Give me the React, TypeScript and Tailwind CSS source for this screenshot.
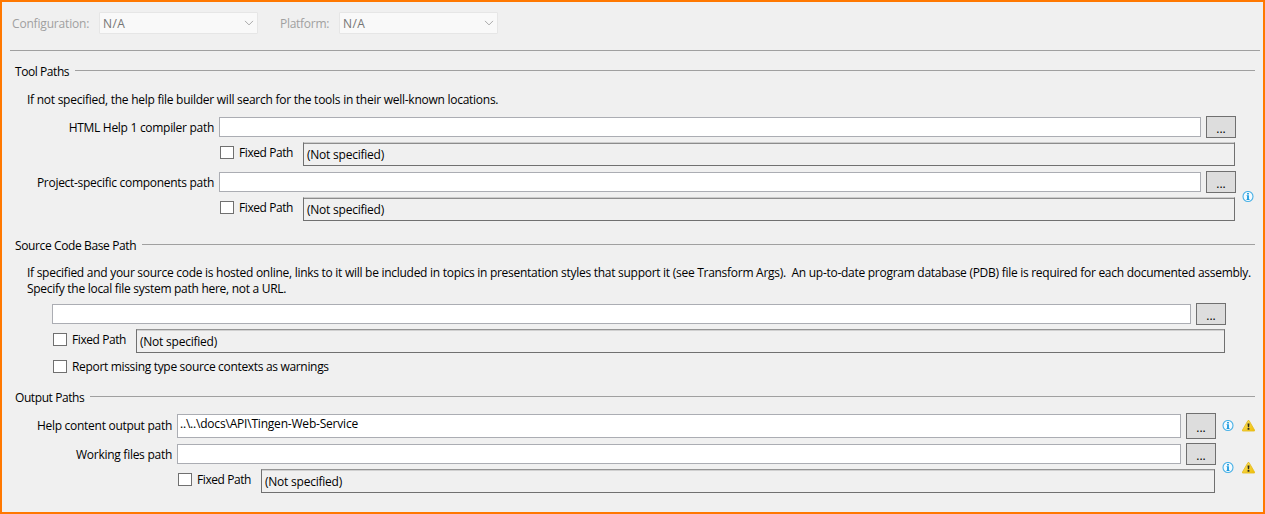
import type { ReactNode } from 'react';

function Select({ value }: { value: string }) {
  return (
    <div className="flex h-[22px] w-[159px] items-center justify-between rounded-[1px] border border-[#e6e6e6] bg-[#f9f9f9] pr-[3px] pl-[3px] text-[#757575]">
      <span className="pt-[2px] tracking-[0.4px]">{value}</span>
      <svg width="10" height="6" viewBox="0 0 10 6" fill="none" stroke="#a9a9a9">
        <path d="M1 0.9 L5 4.9 L9 0.9" />
      </svg>
    </div>
  );
}

function Heading({ children }: { children: ReactNode }) {
  return (
    <div className="flex h-4 items-start gap-[7px] pl-[13px] pr-2">
      <h2 className="shrink-0 leading-4">{children}</h2>
      <div className="mt-[6px] h-px flex-1 bg-[#a0a0a0]" />
    </div>
  );
}

function Browse({ className }: { className: string }) {
  return (
    <button className={`w-[30px] shrink-0 border border-[#707070] bg-[#dddddd] pt-[3px] text-center leading-4 ${className}`}>
      ...
    </button>
  );
}

function Check({ label, className = '' }: { label: string; className?: string }) {
  return (
    <label className={`flex shrink-0 items-center gap-[5px] leading-[13px] ${className}`}>
      <span className="h-[13px] w-[14px] border border-[#707070] bg-white" />
      <span>{label}</span>
    </label>
  );
}

function FixedPath({ edge }: { edge: string }) {
  return (
    <div className="flex items-start">
      <Check label="Fixed Path" className="mt-[4px] w-[83px] tracking-[-0.42px]" />
      <div className={`flex h-6 flex-1 items-center border border-[#707070] pt-[2px] pl-[3px] tracking-[-0.23px] ${edge}`}>
        (Not specified)
      </div>
    </div>
  );
}

const softTop = 'border-t-[#cccccc] shadow-[inset_0_1px_0_#8c8c8c]';
const hardTop = 'border-t-[#949494] shadow-[inset_0_1px_0_#d0d0d0]';

function Info() {
  return (
    <svg width="12" height="12" viewBox="0 0 12 12">
      <circle cx="6" cy="5.5" r="5" fill="#f4fbff" stroke="#49b1e6" strokeWidth="1.1" />
      <path d="M5.1 2.1h1.8v1.4H5.1zM4.6 4.3h2.3v3.8h.6v.8H4.6v-.8h.5v-3h-.5z" fill="#1b9ade" />
    </svg>
  );
}

function Warning() {
  return (
    <svg width="13" height="12" viewBox="0 0 13 12">
      <defs>
        <linearGradient id="warn" x1="0" y1="0" x2="1" y2="1">
          <stop offset="0" stopColor="#f9e26c" />
          <stop offset="1" stopColor="#f0bd00" />
        </linearGradient>
      </defs>
      <path d="M6 0.5 H7 L12.5 10 V11 H0.5 V10 Z" fill="url(#warn)" stroke="#e5bd25" strokeWidth="0.9" strokeLinejoin="round" />
      <path d="M5.5 3.4h2l-.4 3.9H5.9zM5.6 8.1h1.8v1.6H5.6z" fill="#2b2b20" />
    </svg>
  );
}

export default function App() {
  return (
    <main className="h-[514px] w-[1265px] overflow-hidden border-2 border-[#ff7800] bg-[#f0f0f0] font-['Open_Sans','Noto_Sans',sans-serif] text-[12px] whitespace-nowrap text-black">
      <header className="mr-[3px] ml-2 flex h-[49px] items-start border-b border-[#a0a0a0] pt-[10px] pl-[2px] leading-[22px] text-[#a0a0a0]">
        <span className="w-[87px] pt-px tracking-[-0.18px]">Configuration:</span>
        <Select value="N/A" />
        <span className="ml-[22px] w-[59px] pt-px tracking-[-0.28px]">Platform:</span>
        <Select value="N/A" />
      </header>

      <section className="mt-[13px]">
        <Heading><span className="-mr-px tracking-[-0.43px]">Tool Paths</span></Heading>
        <p className="mt-[11px] pt-px pl-[25px] leading-4 tracking-[-0.262px]">
          If not specified, the help file builder will search for the tools in their well-known locations.
        </p>
        <div className="mt-[8px] flex">
          <div className="w-[1234px]">
            <div className="flex h-[22px] items-center">
              <span className="mr-[5px] w-[212px] pt-[2px] text-right tracking-[-0.29px]">HTML Help 1 compiler path</span>
              <div className="h-5 w-[982px] border border-[#abadb3] bg-white" />
              <Browse className="ml-[5px] h-[22px]" />
            </div>
            <div className="mt-[4px] w-[1233px] pl-[218px]"><FixedPath edge={softTop} /></div>
            <div className="mt-[5px] flex h-[22px] items-center">
              <span className="mr-[5px] w-[212px] pt-[2px] text-right tracking-[-0.29px]">Project-specific components path</span>
              <div className="h-5 w-[982px] border border-[#abadb3] bg-white" />
              <Browse className="ml-[5px] h-[22px]" />
            </div>
            <div className="mt-[4px] w-[1233px] pl-[218px]"><FixedPath edge={softTop} /></div>
          </div>
          <div className="mt-[75px] ml-[6px]"><Info /></div>
        </div>
      </section>

      <section className="mt-[17px]">
        <Heading><span className="-mr-px tracking-[-0.38px]">Source Code Base Path</span></Heading>
        <p className="mt-[11px] pl-[25px] leading-4">
          <span className="tracking-[-0.276px]">If specified and your source code is hosted online, links to it will be included in topics in presentation styles that support it (see Transform Args).{'\u00a0'} An up-to-date program database (PDB) file is required for each documented assembly.</span>
          <br />
          <span className="tracking-[-0.283px]">Specify the local file system path here, not a URL.</span>
        </p>
        <div className="mt-[6px] flex h-[22px] items-center pl-[50px]">
          <div className="h-5 w-[1139px] border border-[#abadb3] bg-white" />
          <Browse className="ml-[5px] h-[22px]" />
        </div>
        <div className="mt-[4px] w-[1223px] pl-[51px]"><FixedPath edge={hardTop} /></div>
        <Check label="Report missing type source contexts as warnings" className="mt-[7px] pl-[51px] tracking-[-0.325px]" />
      </section>

      <section className="mt-[17px]">
        <Heading><span className="-mr-px tracking-[-0.42px]">Output Paths</span></Heading>
        <div className="mt-[7px] flex h-[26px] items-center">
          <span className="mr-[5px] w-[170px] text-right tracking-[-0.28px]">Help content output path</span>
          <div className="h-6 w-[1004px] border border-[#abadb3] bg-white pl-[2px] leading-[18px] tracking-[-0.2px]">
            ..\..\docs\API\Tingen-Web-Service
          </div>
          <Browse className="ml-[5px] h-[26px]" />
          <div className="ml-[6px] flex gap-[8px]"><Info /><Warning /></div>
        </div>
        <div className="mt-[4px] flex">
          <div className="w-[1214px]">
            <div className="flex h-[22px] items-center">
              <span className="mr-[5px] w-[170px] pt-[2px] text-right tracking-[-0.27px]">Working files path</span>
              <div className="h-5 w-[1004px] border border-[#abadb3] bg-white" />
              <Browse className="ml-[5px] h-[22px]" />
            </div>
            <div className="mt-[4px] w-[1213px] pl-[176px]"><FixedPath edge={hardTop} /></div>
          </div>
          <div className="mt-[19px] ml-[6px] flex items-start gap-[8px]"><Info /><Warning /></div>
        </div>
      </section>
    </main>
  );
}
